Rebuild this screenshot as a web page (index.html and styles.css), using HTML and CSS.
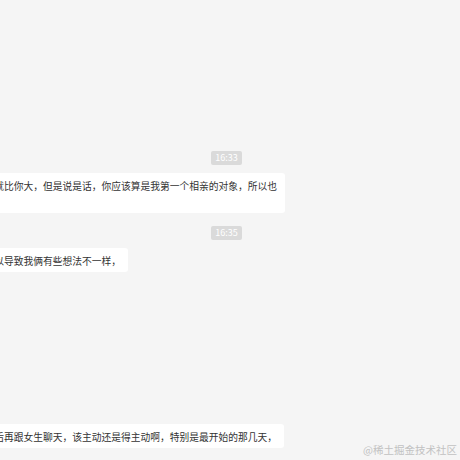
FILE: index.html
```html
<!DOCTYPE html>
<html lang="zh-CN">
<head>
<meta charset="utf-8">
<title>chat</title>
<link rel="stylesheet" href="styles.css">
</head>
<body>
<div class="chat">
  <div class="time"><span class="time-tag">16:33</span></div>
  <div class="msg"><div class="bubble">其实我年龄也不一定就比你大，但是说是话，你应该算是我第一个相亲的对象，所以也有点紧张</div></div>
  <div class="time"><span class="time-tag">16:35</span></div>
  <div class="msg"><div class="bubble">我们环境不太一样所以导致我俩有些想法不一样，</div></div>
  <div class="msg msg-gap"><div class="bubble">所以我建议你呀，以后再跟女生聊天，该主动还是得主动啊，特别是最开始的那几天，</div></div>
</div>
<div class="watermark">@稀土掘金技术社区</div>
</body>
</html>
```
FILE: styles.css
```css
html, body {
  margin: 0;
  padding: 0;
  width: 460px;
  height: 460px;
  overflow: hidden;
  background: #f5f5f5;
  font-family: "Noto Sans CJK SC", "Noto Sans", sans-serif;
}

body {
  position: relative;
}

.chat {
  display: flex;
  flex-direction: column;
  padding-top: 151px;
}

.time {
  display: flex;
  justify-content: center;
  padding-right: 7px;
  margin-bottom: 8px;
}

.time-tag {
  background: #dadada;
  color: #ffffff;
  font-size: 9px;
  line-height: 14px;
  padding: 0 4px;
  border-radius: 2px;
}

.msg {
  display: flex;
  margin-bottom: 13px;
}

.msg-gap {
  margin-top: 139px;
}

.bubble {
  box-sizing: border-box;
  margin-left: -100.5px;
  max-width: 385.5px;
  padding: 5px 7px 3px;
  background: #ffffff;
  border-radius: 3px;
  color: #333333;
  font-size: 9.75px;
  line-height: 16px;
  text-spacing-trim: space-all;
}

.watermark {
  position: absolute;
  right: 3px;
  bottom: 4px;
  color: #c2c2c2;
  font-size: 10.5px;
  line-height: 12px;
}
```
